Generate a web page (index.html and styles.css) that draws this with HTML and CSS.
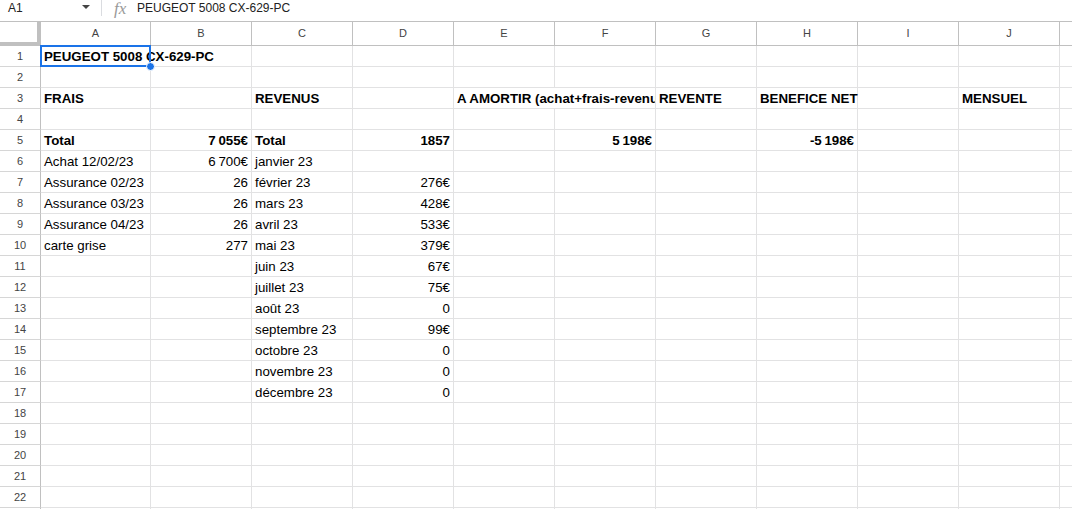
FILE: index.html
```html
<!DOCTYPE html>
<html lang="fr">
<head>
  <meta charset="UTF-8" />
  <title>PEUGEOT 5008 CX-629-PC</title>
  <link rel="stylesheet" href="styles.css">
</head>
<body>

  <!-- Formula bar -->
  <div class="toolbar">
    <div class="namebox">A1<span class="caret"></span></div>
    <div class="fx">fx</div>
    <div class="formula">PEUGEOT 5008 CX-629-PC</div>
  </div>

  <!-- Sheet -->
  <div class="sheet">
    <div class="row head"><div class="corner"></div><div>A</div><div>B</div><div>C</div><div>D</div><div>E</div><div>F</div><div>G</div><div>H</div><div>I</div><div>J</div><div></div></div>

    <div class="row"><div class="num">1</div><div class="b sel">PEUGEOT 5008 CX-629-PC</div><div></div><div></div><div></div><div></div><div></div><div></div><div></div><div></div><div></div><div></div></div>
    <div class="row"><div class="num">2</div><div></div><div></div><div></div><div></div><div></div><div></div><div></div><div></div><div></div><div></div><div></div></div>
    <div class="row"><div class="num">3</div><div class="b">FRAIS</div><div></div><div class="b">REVENUS</div><div></div><div class="b span2">A AMORTIR (achat+frais-revenus)</div><div class="b">REVENTE</div><div class="b">BENEFICE NET</div><div></div><div class="b">MENSUEL</div><div></div></div>
    <div class="row"><div class="num">4</div><div></div><div></div><div></div><div></div><div></div><div></div><div></div><div></div><div></div><div></div><div></div></div>
    <div class="row"><div class="num">5</div><div class="b">Total</div><div class="b r">7&#8239;055€</div><div class="b">Total</div><div class="b r">1857</div><div></div><div class="b r">5&#8239;198€</div><div></div><div class="b r">-5&#8239;198€</div><div></div><div></div><div></div></div>
    <div class="row"><div class="num">6</div><div>Achat 12/02/23</div><div class="r">6&#8239;700€</div><div>janvier 23</div><div></div><div></div><div></div><div></div><div></div><div></div><div></div><div></div></div>
    <div class="row"><div class="num">7</div><div>Assurance 02/23</div><div class="r">26</div><div>février 23</div><div class="r">276€</div><div></div><div></div><div></div><div></div><div></div><div></div><div></div></div>
    <div class="row"><div class="num">8</div><div>Assurance 03/23</div><div class="r">26</div><div>mars 23</div><div class="r">428€</div><div></div><div></div><div></div><div></div><div></div><div></div><div></div></div>
    <div class="row"><div class="num">9</div><div>Assurance 04/23</div><div class="r">26</div><div>avril 23</div><div class="r">533€</div><div></div><div></div><div></div><div></div><div></div><div></div><div></div></div>
    <div class="row"><div class="num">10</div><div>carte grise</div><div class="r">277</div><div>mai 23</div><div class="r">379€</div><div></div><div></div><div></div><div></div><div></div><div></div><div></div></div>
    <div class="row"><div class="num">11</div><div></div><div></div><div>juin 23</div><div class="r">67€</div><div></div><div></div><div></div><div></div><div></div><div></div><div></div></div>
    <div class="row"><div class="num">12</div><div></div><div></div><div>juillet 23</div><div class="r">75€</div><div></div><div></div><div></div><div></div><div></div><div></div><div></div></div>
    <div class="row"><div class="num">13</div><div></div><div></div><div>août 23</div><div class="r">0</div><div></div><div></div><div></div><div></div><div></div><div></div><div></div></div>
    <div class="row"><div class="num">14</div><div></div><div></div><div>septembre 23</div><div class="r">99€</div><div></div><div></div><div></div><div></div><div></div><div></div><div></div></div>
    <div class="row"><div class="num">15</div><div></div><div></div><div>octobre 23</div><div class="r">0</div><div></div><div></div><div></div><div></div><div></div><div></div><div></div></div>
    <div class="row"><div class="num">16</div><div></div><div></div><div>novembre 23</div><div class="r">0</div><div></div><div></div><div></div><div></div><div></div><div></div><div></div></div>
    <div class="row"><div class="num">17</div><div></div><div></div><div>décembre 23</div><div class="r">0</div><div></div><div></div><div></div><div></div><div></div><div></div><div></div></div>
    <div class="row"><div class="num">18</div><div></div><div></div><div></div><div></div><div></div><div></div><div></div><div></div><div></div><div></div><div></div></div>
    <div class="row"><div class="num">19</div><div></div><div></div><div></div><div></div><div></div><div></div><div></div><div></div><div></div><div></div><div></div></div>
    <div class="row"><div class="num">20</div><div></div><div></div><div></div><div></div><div></div><div></div><div></div><div></div><div></div><div></div><div></div></div>
    <div class="row"><div class="num">21</div><div></div><div></div><div></div><div></div><div></div><div></div><div></div><div></div><div></div><div></div><div></div></div>
    <div class="row"><div class="num">22</div><div></div><div></div><div></div><div></div><div></div><div></div><div></div><div></div><div></div><div></div><div></div></div>
    <div class="row"><div class="num"></div><div></div><div></div><div></div><div></div><div></div><div></div><div></div><div></div><div></div><div></div><div></div></div>
  </div>

</body>
</html>
```

FILE: styles.css
```css
/* General */
body {
  margin: 0;
  width: 1072px;
  height: 509px;
  overflow: hidden;
  background: #fff;
  font-family: "Liberation Sans", Arial, sans-serif;
  color: #000;
}

/* Formula bar */
.toolbar {
  display: flex;
  align-items: flex-start;
  height: 21px;
  border-bottom: 1px solid #c0c0c0;
  font-size: 12px;
  color: #222;
}

.namebox {
  position: relative;
  width: 102px;
  height: 16px;
  padding: 1px 0 0 8px;
  box-sizing: border-box;
  line-height: 14px;
  border-right: 1px solid #dadce0;
}

.caret {
  position: absolute;
  left: 82px;
  top: 5px;
  border-left: 4px solid transparent;
  border-right: 4px solid transparent;
  border-top: 4px solid #444;
}

.fx {
  width: 35px;
  padding-left: 12px;
  box-sizing: border-box;
  font-family: "Liberation Serif", serif;
  font-style: italic;
  font-size: 17px;
  color: #999;
  line-height: 17px;
}

.formula {
  padding-top: 1px;
  line-height: 14px;
}

/* Grid */
.row {
  display: grid;
  grid-template-columns: 41px 110px repeat(10, 101px);
  height: 21px;
}

.row > div {
  display: flex;
  align-items: flex-end;
  box-sizing: border-box;
  padding: 0 3px 1px;
  border-right: 1px solid #e2e2e3;
  border-bottom: 1px solid #e2e2e3;
  font-size: 13.3px;
  line-height: 17px;
  white-space: nowrap;
}

.row > .num {
  justify-content: center;
  align-items: center;
  padding: 0;
  font-size: 11px;
  color: #444;
  border-right-color: #c0c0c0;
  border-bottom-color: #d6d6d6;
}

/* Column headers */
.row.head {
  height: 24px;
}

.row.head > div {
  justify-content: center;
  align-items: center;
  padding: 0;
  font-size: 11px;
  color: #444;
  border-right-color: #c0c0c0;
  border-bottom-color: #c0c0c0;
}

.row.head > .corner {
  box-shadow: inset -3px -3px 0 #c0c0c0;
}

/* Cell formats */
.b {
  font-weight: bold;
}

.row > .r {
  justify-content: flex-end;
}

.row > .span2 {
  grid-column: span 2;
  overflow: hidden;
}

/* Selected cell */
.sel {
  position: relative;
}

.sel::before {
  content: "";
  position: absolute;
  inset: -1px;
  border: 2px solid #1a73e8;
}

.sel::after {
  content: "";
  position: absolute;
  right: -5px;
  bottom: -5px;
  width: 7px;
  height: 7px;
  border-radius: 50%;
  background: #1a73e8;
  border: 1px solid #fff;
}
```
